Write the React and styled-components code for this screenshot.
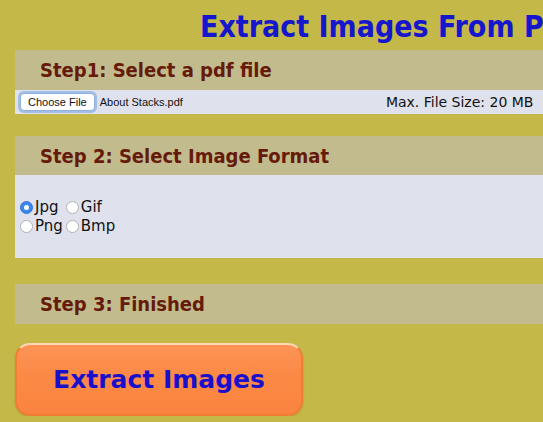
import styled, { createGlobalStyle } from 'styled-components';

const GlobalStyle = createGlobalStyle`
  html, body {
    margin: 0;
    padding: 0;
    overflow: hidden;
    background: #c4b848;
  }
  *, *::before, *::after {
    box-sizing: border-box;
  }
`;

const Page = styled.div`
  width: 640px;
  padding: 0 0 0 15px;
  font-family: "DejaVu Sans", Verdana, sans-serif;
`;

// title is wider than the frame, the reference crops it after "From P"
const Title = styled.h1`
  margin: 0;
  height: 50px;
  padding: 3px 0 0 185px;
  font-family: "DejaVu Sans Condensed", "DejaVu Sans", sans-serif;
  font-size: 30px;
  font-weight: bold;
  line-height: 47px;
  color: #1616cc;
  white-space: nowrap;
`;

const Section = styled.section`
  display: flex;
  flex-direction: column;
  margin-top: ${({ $gap }) => $gap}px;
`;

const StepHeader = styled.div`
  height: ${({ $h }) => $h}px;
  display: flex;
  align-items: center;
  padding-left: 25px;
  background: #c1bb8d;
  color: #661a0a;
  font-family: "DejaVu Sans Condensed", "DejaVu Sans", sans-serif;
  font-size: 20px;
  font-weight: bold;
`;

const FileRow = styled.div`
  height: 24px;
  display: flex;
  align-items: center;
  padding: 0 0 0 3px;
  background: #dfe2ec;
`;

const ChooseButton = styled.button`
  height: 18px;
  padding: 0 7px;
  margin-left: 2px;
  font-family: "Liberation Sans", Arial, sans-serif;
  font-size: 11px;
  color: #111;
  background: #fff;
  border: 1px solid #8fb1dc;
  border-radius: 4px;
  box-shadow: 0 0 0 2px rgba(110, 160, 225, 0.55);
`;

const FileName = styled.span`
  margin-left: 5px;
  font-family: "Liberation Sans", Arial, sans-serif;
  font-size: 11px;
  color: #111;
`;

// sits near the right edge of the visible frame
const MaxSize = styled.span`
  margin-left: 203px;
  font-size: 14px;
  color: #111;
`;

const FormatBody = styled.div`
  height: 83px;
  display: grid;
  grid-template-columns: auto auto;
  justify-content: start;
  align-content: center;
  column-gap: 3px;
  row-gap: 1px;
  padding: 0 0 0 5px;
  background: #dfe2ec;
`;

const RadioLabel = styled.label`
  display: flex;
  align-items: center;
  gap: 2px;
  font-size: 15px;
  line-height: 18px;
  color: #111;
`;

const RadioDot = styled.span`
  width: 13px;
  height: 13px;
  border-radius: 50%;
  background: ${({ $on }) => ($on ? '#3b87ee' : '#fff')};
  border: 1px solid ${({ $on }) => ($on ? '#2f74d6' : '#b2b2b2')};
  display: flex;
  align-items: center;
  justify-content: center;

  &::after {
    content: '';
    width: 5px;
    height: 5px;
    border-radius: 50%;
    background: #fff;
    display: ${({ $on }) => ($on ? 'block' : 'none')};
  }
`;

const ExtractButton = styled.button`
  margin-top: 19px;
  width: 288px;
  height: 73px;
  border-radius: 15px;
  border: 2px solid #f27c33;
  border-top-color: #fcd9b4;
  background: linear-gradient(#fd9456, #fb8a46 40%, #fa843f);
  box-shadow: 0 1px 2px rgba(120, 80, 0, 0.3);
  color: #1a10cc;
  font-family: "DejaVu Sans", Verdana, sans-serif;
  font-size: 25px;
  font-weight: 900;
  text-align: center;
  padding: 0;
`;

const formats = [
  { id: 'jpg', label: 'Jpg', on: true },
  { id: 'gif', label: 'Gif' },
  { id: 'png', label: 'Png' },
  { id: 'bmp', label: 'Bmp' },
];

const App = () => (
  <Page>
    <GlobalStyle />
    <Title>Extract Images From PDF</Title>

    <Section $gap={0}>
      <StepHeader $h={40}>Step1: Select a pdf file</StepHeader>
      <FileRow>
        <ChooseButton type="button">Choose File</ChooseButton>
        <FileName>About Stacks.pdf</FileName>
        <MaxSize>Max. File Size: 20 MB</MaxSize>
      </FileRow>
    </Section>

    <Section $gap={22}>
      <StepHeader $h={39}>Step 2: Select Image Format</StepHeader>
      <FormatBody>
        {formats.map((f) => (
          <RadioLabel key={f.id}>
            <RadioDot $on={f.on} />
            {f.label}
          </RadioLabel>
        ))}
      </FormatBody>
    </Section>

    <Section $gap={26}>
      <StepHeader $h={40}>Step 3: Finished</StepHeader>
    </Section>

    <ExtractButton type="button">Extract Images</ExtractButton>
  </Page>
);

export default App;
